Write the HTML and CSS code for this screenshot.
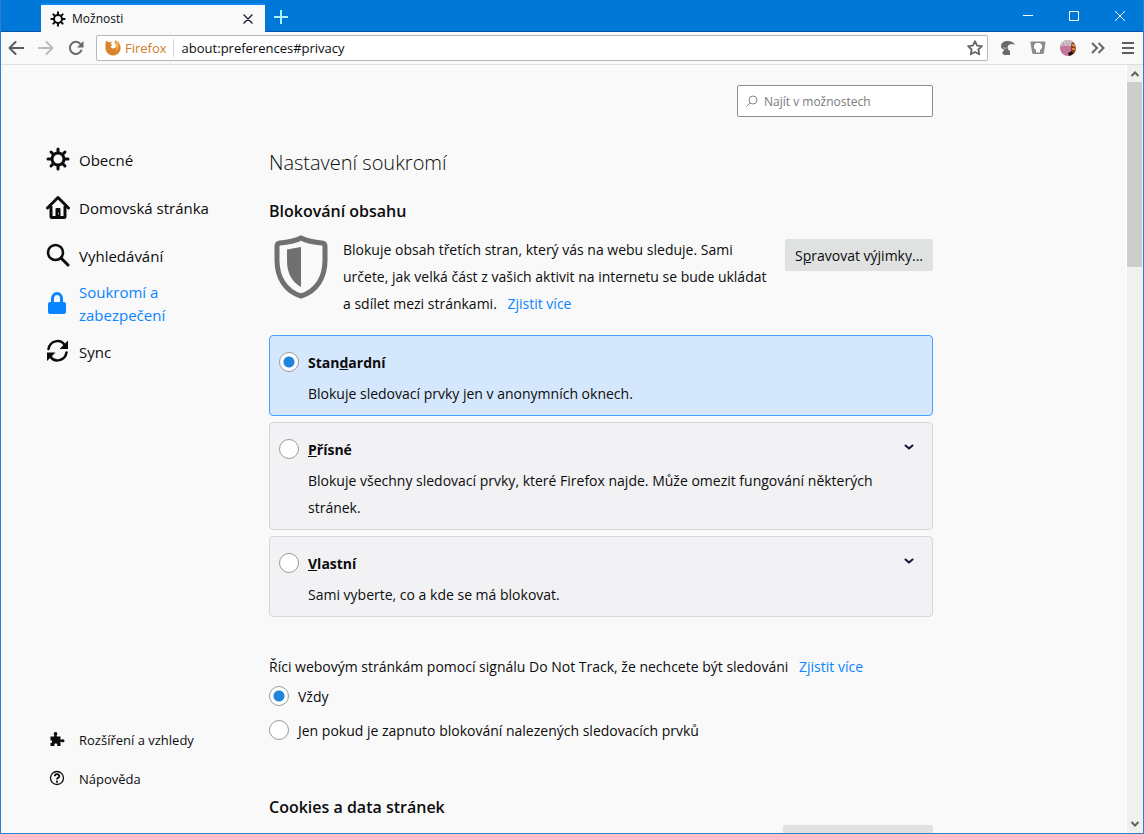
FILE: index.html
```html
<!DOCTYPE html>
<html lang="cs">
<head>
<meta charset="utf-8">
<title>Možnosti</title>
<link rel="stylesheet" href="styles.css">
</head>
<body>
<svg class="defs" aria-hidden="true">
  <symbol id="gear" viewBox="0 0 24 24">
    <circle cx="12" cy="12" r="6" fill="none" stroke="currentColor" stroke-width="3"/>
    <path d="M12 2v3M12 19v3M2 12h3M19 12h3M5 5l2 2M17 17l2 2M19 5l-2 2M7 17l-2 2" fill="none" stroke="currentColor" stroke-width="3" stroke-linecap="round"/>
  </symbol>
  <symbol id="chevron" viewBox="0 0 10 8">
    <path d="M1.500 2.500L5 5.500l3.500-3" fill="none" stroke="currentColor" stroke-width="2" stroke-linecap="round"/>
  </symbol>
</svg>
<div class="window">
  <header class="titlebar">
    <div class="tab">
      <svg class="tab-icon"><use href="#gear"/></svg>
      <span class="tab-title">Možnosti</span>
      <button class="plain tab-close" aria-label="Zavřít panel"><svg width="10" height="10" viewBox="0 0 10 10"><path d="M1 1l8 8M9 1l-8 8" fill="none" stroke="#2a2440" stroke-width="1.500" stroke-linecap="round"/></svg></button>
    </div>
    <button class="plain new-tab" aria-label="Nový panel"><svg width="14" height="14" viewBox="0 0 14 14"><path d="M7 0v14M0 7h14" stroke="#a8f4ff" stroke-width="2"/></svg></button>
    <div class="controls">
      <button class="plain control" aria-label="Minimalizovat"><svg width="10" height="10" viewBox="0 0 10 10"><path d="M0 4.500h10" stroke="#fff"/></svg></button>
      <button class="plain control" aria-label="Maximalizovat"><svg width="10" height="10" viewBox="0 0 10 10"><path d="M.5.500h9v9h-9z" fill="none" stroke="#fff"/></svg></button>
      <button class="plain control" aria-label="Zavřít"><svg width="10" height="10" viewBox="0 0 10 10"><path d="M0 0l10 10M10 0L0 10" stroke="#fff"/></svg></button>
    </div>
  </header>
  <div class="toolbar">
    <button class="plain tool" aria-label="Zpět"><svg width="16" height="16" viewBox="0 0 16 16"><path d="M15.500 8H1.500M7.500 2l-6 6 6 6" fill="none" stroke="#5c5c5e" stroke-width="2" stroke-linecap="round" stroke-linejoin="round"/></svg></button>
    <button class="plain tool" aria-label="Vpřed"><svg width="16" height="16" viewBox="0 0 16 16"><path d="M.5 8h14M8.500 2l6 6-6 6" fill="none" stroke="#bcbcbc" stroke-width="2" stroke-linecap="round" stroke-linejoin="round"/></svg></button>
    <button class="plain tool" aria-label="Obnovit"><svg width="16" height="16" viewBox="0 0 16 16"><path d="M13.300 10.500A6 6 0 1 1 12.500 4" fill="none" stroke="#696969" stroke-width="2" stroke-linecap="round"/><path d="M15.500 1v6.500H9z" fill="#696969"/></svg></button>
    <div class="urlbar">
      <svg class="fox" width="16" height="16" viewBox="0 0 16 16"><path d="M.5 3L1.500.5 3.500 2.500 7 1.500 5.500 4 7.500 5 5.500 6.500C6.500 9 10 9 11 6.500 11.500 4.500 10 4 9.500 2.500L10 .5C14 1 16 5 15.500 9c-.5 4-4 6.500-7.500 6.500-4 0-7-3-7.500-6.500z" fill="#d9822b"/><path d="M10 .5c2 .5 4 2.500 4.500 5L13 4.500c1 3 0 6-2.500 7 1.500-2 1.500-4 .5-5.500z" fill="#f6b45a"/></svg>
      <span class="identity">Firefox</span>
      <input class="address" type="text" aria-label="Adresa" value="about:preferences#privacy">
      <button class="plain star" aria-label="Přidat do záložek"><svg width="16" height="16" viewBox="0 0 16 16"><path d="M8 1.200l2.100 4.400 4.800.6-3.500 3.300.9 4.800L8 12l-4.300 2.300.9-4.800L1.100 6.200l4.800-.6z" fill="none" stroke="#666" stroke-width="1.800" stroke-linejoin="round"/></svg></button>
    </div>
    <div class="extensions">
      <button class="plain tool" aria-label="Rozšíření 1"><svg width="16" height="16" viewBox="0 0 16 16"><path d="M15 5C14 2 10 .5 6 1 3 1.500 1 3.500 1 6c0 2 1.500 3.500 3.500 3.500L2 13l2 2h6v-4c-2-1-3-3-2-5s4-3 7-1z" fill="#696969"/><path d="M3.500 7.500q1.500 1.500 3 .5" fill="none" stroke="#c4c4c4"/></svg></button>
      <button class="plain tool" aria-label="Rozšíření 2"><svg width="16" height="16" viewBox="0 0 16 16"><path d="M1.500 1.500h13c.8 0 1.200.7 1 1.500l-1.600 9.500c-.2 1-1 1.500-2 1.500H4.100c-1 0-1.800-.5-2-1.500L.5 3c-.2-.8.200-1.500 1-1.500z" fill="#8b8b8b"/><path d="M6 3h4l2 2v3l-2 2v2.500H6V10L4 8V5z" fill="#fff"/></svg></button>
      <button class="plain tool" aria-label="Rozšíření 3"><svg width="16" height="16" viewBox="0 0 16 16"><circle cx="8" cy="8" r="8" fill="#c27699"/><path d="M1 5C3-1 10-1 13 2l-2 4H1z" fill="#c9c2c8"/><path d="M3 4h1M6 3h1M4 6h1M7 5h1M2 6h1M9 3h1" stroke="#c27699"/><path d="M12 2c3 2 5 7 2.500 11L10 16c2-4 0-9 2-14z" fill="#8d3f12"/><path d="M12 5l3 1M12 9h3" stroke="#efa23c" stroke-width="1.500"/><path d="M8 13l4-2 1 3-4 2z" fill="#241016"/></svg></button>
      <button class="plain tool" aria-label="Další nástroje"><svg width="16" height="16" viewBox="0 0 16 16"><path d="M2 3l5 5-5 5M8.500 3l5 5-5 5" fill="none" stroke="#666" stroke-width="2"/></svg></button>
      <button class="plain tool" aria-label="Nabídka"><svg width="16" height="16" viewBox="0 0 16 16"><path d="M2 3h12M2 8h12M2 13h12" stroke="#5f5f5f" stroke-width="2"/></svg></button>
    </div>
  </div>
  <div class="viewport">
    <aside class="sidebar">
      <nav class="categories">
        <a class="category" href="#general"><svg class="cat-icon"><use href="#gear"/></svg><span>Obecné</span></a>
        <a class="category" href="#home"><svg class="cat-icon" viewBox="0 0 24 24"><path d="M1.500 13L12 2.500 22.500 13" fill="none" stroke="#0c0c0d" stroke-width="3" stroke-linecap="round" stroke-linejoin="round"/><path d="M5 11v10.500q0 1 1 1h12q1 0 1-1V11" fill="none" stroke="#0c0c0d" stroke-width="3"/><path d="M9.500 22v-8q0-1 1-1h3q1 0 1 1v8z" fill="#0c0c0d"/><path d="M12.500 17.500v2" stroke="#999" stroke-width="1"/></svg><span>Domovská stránka</span></a>
        <a class="category" href="#search"><svg class="cat-icon" viewBox="0 0 24 24"><circle cx="9.500" cy="9.500" r="7.500" fill="none" stroke="#0c0c0d" stroke-width="2.500"/><path d="M15 15l7 7" stroke="#0c0c0d" stroke-width="3" stroke-linecap="round"/></svg><span>Vyhledávání</span></a>
        <a class="category selected" href="#privacy"><svg class="cat-icon" viewBox="0 0 24 24"><path d="M6.500 12V7.500a4.500 5 0 0 1 9 0V12" fill="none" stroke="currentColor" stroke-width="3"/><rect x="2" y="11" width="18" height="12" rx="2" fill="currentColor"/></svg><span>Soukromí a zabezpečení</span></a>
        <a class="category" href="#sync"><svg class="cat-icon" viewBox="0 0 24 24"><path d="M2.500 10C4 1.500 14.500-.5 18.500 6M20.500 13.500C19 22 8.500 24 4.500 17.500" fill="none" stroke="#0c0c0d" stroke-width="2.500" stroke-linecap="round"/><path d="M22 1.500v8.500h-8.500zM1 22v-8.500h8.500z" fill="#0c0c0d"/></svg><span>Sync</span></a>
      </nav>
      <div class="help-links">
        <a class="help" href="#addons"><svg class="help-icon" viewBox="0 0 16 16"><path d="M1.500 5.500h3.700V4C4 2.500 5 1 6.500 1S9 2.500 7.800 4v1.500h3.700V9c1.200-1.200 4-1 4 .8s-2.800 2-4 .8V15H8.200v-1.200c.8-1.600-3.600-1.600-2.800 0V15H1.500v-3.200c2 .8 2.500-2.800 0-2.300z" fill="#0c0c0d"/></svg><span>Rozšíření a vzhledy</span></a>
        <a class="help" href="#help"><svg class="help-icon" viewBox="0 0 16 16"><circle cx="8" cy="8" r="6.500" fill="none" stroke="#0c0c0d" stroke-width="1.300"/><path d="M5.800 6.300C5.800 3.500 10.300 3.500 10.300 6.200 10.300 7.800 8 7.800 8 9.400" fill="none" stroke="#0c0c0d" stroke-width="1.800"/><circle cx="8" cy="11.700" r="1.100" fill="#0c0c0d"/></svg><span>Nápověda</span></a>
      </div>
    </aside>
    <main class="content">
      <div class="search-row">
        <label class="search"><svg width="12" height="12" viewBox="0 0 12 12"><circle cx="7" cy="5" r="4" fill="none" stroke="#888"/><path d="M4 8L.5 11.500" stroke="#888"/></svg><input type="search" placeholder="Najít v možnostech" aria-label="Najít v možnostech"></label>
      </div>
      <h1>Nastavení soukromí</h1>
      <h2>Blokování obsahu</h2>
      <div class="intro">
        <svg class="shield" viewBox="0 0 54 64"><path d="M27 3C21 6 13 7.500 6 8 4 8.200 3 9.500 3 11.500v14C3 42 11 56 27 61c16-5 24-19 24-35.500v-14c0-2-1-3.300-3-3.500C41 7.500 33 6 27 3z" fill="none" stroke="#707070" stroke-width="5"/><path d="M27 12v40C18 47 13 38 13 26V14.500z" fill="#707070"/></svg>
        <p>Blokuje obsah třetích stran, který vás na webu sleduje. Sami určete, jak velká část z vašich aktivit na internetu se bude ukládat a sdílet mezi stránkami. <a class="more" href="#info">Zjistit více</a></p>
        <button class="action">S<u>p</u>ravovat výjimky...</button>
      </div>
      <div class="options">
        <section class="option active">
          <input type="radio" name="blocking" id="standard" checked>
          <label for="standard">Stan<u>d</u>ardní</label>
          <p>Blokuje sledovací prvky jen v anonymních oknech.</p>
        </section>
        <section class="option">
          <input type="radio" name="blocking" id="strict">
          <label for="strict"><u>P</u>řísné</label>
          <button class="plain expand" aria-label="Rozbalit přísné"><svg width="10" height="8"><use href="#chevron"/></svg></button>
          <p>Blokuje všechny sledovací prvky, které Firefox najde. Může omezit fungování některých stránek.</p>
        </section>
        <section class="option">
          <input type="radio" name="blocking" id="custom">
          <label for="custom"><u>V</u>lastní</label>
          <button class="plain expand" aria-label="Rozbalit vlastní"><svg width="10" height="8"><use href="#chevron"/></svg></button>
          <p>Sami vyberte, co a kde se má blokovat.</p>
        </section>
      </div>
      <div class="dnt">
        <p>Říci webovým stránkám pomocí signálu Do Not Track, že nechcete být sledováni <a class="more" href="#dnt">Zjistit více</a></p>
        <label class="choice"><input type="radio" name="dnt" checked>Vždy</label>
        <label class="choice"><input type="radio" name="dnt">Jen pokud je zapnuto blokování nalezených sledovacích prvků</label>
      </div>
      <h2 class="cookies">Cookies a data stránek</h2>
      <div class="cookie-row"><button class="action wide" aria-label="Vymazat data"></button></div>
    </main>
    <div class="scrollbar" aria-hidden="true">
      <svg class="arrow" width="10" height="8" viewBox="0 0 10 8"><path d="M1.500 6L5 2.500 8.500 6" fill="none" stroke="#606060" stroke-width="2"/></svg>
      <div class="thumb"></div>
      <svg class="arrow" width="10" height="8" viewBox="0 0 10 8"><path d="M1.500 2L5 5.500 8.500 2" fill="none" stroke="#606060" stroke-width="2"/></svg>
    </div>
  </div>
</div>
</body>
</html>
```
FILE: styles.css
```css
* { box-sizing: border-box; }
body {
  margin: 0;
  font-family: "Open Sans", "Noto Sans", sans-serif;
  font-size: 14px;
  color: #0c0c0d;
}
h1, h2, p { margin: 0; }
svg { display: block; flex: none; }
.defs { display: none; }
a { text-decoration: none; color: inherit; }
button, input { font: inherit; color: inherit; }
.plain {
  display: flex;
  align-items: center;
  justify-content: center;
  padding: 0;
  border: 0;
  background: none;
}
.window {
  display: flex;
  flex-direction: column;
  height: 100vh;
  overflow: hidden;
  border: 1px solid #2a82cc;
  border-top: 0;
  background: #f9f9f9;
}

.titlebar {
  display: flex;
  flex: none;
  height: 32px;
  padding-left: 40px;
  background: linear-gradient(#0078d7 31px, #0054a8 31px);
}
.tab {
  display: flex;
  align-items: center;
  width: 224px;
  margin-top: 3px;
  padding: 0 12px 0 9px;
  border-top: 2px solid #0a84ff;
  background: #f9f9f9;
  font-size: 12px;
}
.tab-icon { width: 16px; height: 16px; margin-right: 6px; }
.tab-title { flex: 1; }
.new-tab { width: 32px; height: 34px; }
.controls { display: flex; margin-left: auto; }
.control { width: 46px; height: 32px; }

.toolbar {
  display: flex;
  flex: none;
  align-items: center;
  height: 33px;
  border-bottom: 1px solid #dedede;
}
.tool { width: 30px; height: 32px; }
.urlbar {
  display: flex;
  flex: 1;
  align-items: center;
  height: 26px;
  margin: 0 5px;
  padding: 0 4px 0 8px;
  border: 1px solid #b8b8b8;
  border-radius: 2px;
  background: #fff;
}
.identity {
  margin: 0 8px 0 4px;
  padding-right: 6px;
  border-right: 1px solid #d7d7db;
  color: #d07c2d;
  font-size: 13px;
  line-height: 18px;
}
.address {
  flex: 1;
  min-width: 0;
  padding: 0;
  border: 0;
  outline: 0;
  background: none;
  font-size: 13px;
}
.extensions { display: flex; }

.viewport { display: flex; flex: 1; min-height: 0; }
.sidebar {
  display: flex;
  flex: none;
  flex-direction: column;
  justify-content: space-between;
  width: 268px;
  padding: 71px 48px 35px 45px;
}
.category {
  display: flex;
  align-items: center;
  gap: 9px;
  height: 48px;
  font-size: 15px;
  line-height: 23px;
}
.cat-icon { width: 24px; height: 24px; margin-bottom: 2px; }
.selected { color: #0a84ff; }
.help {
  display: flex;
  align-items: center;
  gap: 14px;
  height: 39px;
  padding-left: 3px;
  font-size: 13px;
}
.help-icon { width: 16px; height: 16px; margin-bottom: 2px; }

.content {
  flex: 0 1 664px;
  min-width: 0;
  padding-top: 20px;
  overflow: hidden;
}
.search-row { display: flex; justify-content: flex-end; }
.search {
  display: flex;
  align-items: center;
  gap: 6px;
  width: 196px;
  height: 32px;
  padding: 0 8px;
  border: 1px solid #8c8c8c;
  border-radius: 2px;
  background: #fff;
}
.search input {
  flex: 1;
  min-width: 0;
  padding: 0;
  border: 0;
  outline: 0;
  background: none;
  font-size: 12px;
}
.search input::placeholder { color: #7a7a7a; }
h1 {
  margin-top: 31px;
  font-size: 20px;
  font-weight: 300;
  line-height: 30px;
}
h2 {
  margin-top: 21px;
  font-size: 16px;
  font-weight: 600;
  line-height: 24px;
}
p { line-height: 27px; }
.intro {
  display: flex;
  align-items: flex-start;
  margin-top: 13px;
}
.intro p { flex: 1; margin: 0 12px 0 15px; }
.shield { width: 54px; height: 64px; margin: -1px 0 0 5px; }
.more { margin-left: 7px; color: #0a84ff; }
.action {
  height: 32px;
  margin-top: 3px;
  padding: 0 10px;
  border: 0;
  border-radius: 2px;
  background: #e0e2e1;
}
.options {
  display: flex;
  flex-direction: column;
  gap: 6px;
  margin-top: 18px;
}
.option {
  display: grid;
  grid-template-columns: 20px 1fr 20px;
  column-gap: 9px;
  row-gap: 4px;
  align-items: center;
  padding: 14px 13px 8px 9px;
  border: 1px solid #d7d7db;
  border-radius: 4px;
  background: #f2f2f4;
}
.option.active { border-color: #45a1ff; background: #d5e7fc; }
.option label { font-weight: 700; line-height: 26px; }
.option p { grid-column: 2 / 4; margin-right: 24px; }
.expand { width: 20px; height: 20px; align-self: start; color: #160f3a; }
input[type="radio"] {
  flex: none;
  appearance: none;
  width: 20px;
  height: 20px;
  margin: 0;
  border: 1px solid #9a9a9c;
  border-radius: 50%;
  background: #fff;
}
.option input[type="radio"] { margin-bottom: 2px; }
input[type="radio"]:checked {
  background: radial-gradient(circle, #1e84dc 5px, #fff 6px);
}
.dnt { margin-top: 36px; }
.choice {
  display: flex;
  align-items: center;
  gap: 9px;
  height: 34px;
}
.choice:first-of-type { margin-top: -1px; }
.cookies { margin-top: 48px; }
.cookie-row { display: flex; justify-content: flex-end; margin-top: 3px; }
.wide { width: 150px; }

.scrollbar {
  display: flex;
  flex: none;
  flex-direction: column;
  align-items: center;
  width: 17px;
  margin-left: auto;
  padding: 5px 1px 5px 0;
  border-left: 1px solid #fff;
  background: #f0f0f0;
}
.thumb { width: 100%; height: 185px; margin: 4px 0 auto; background: #cdcdcd; }
```
